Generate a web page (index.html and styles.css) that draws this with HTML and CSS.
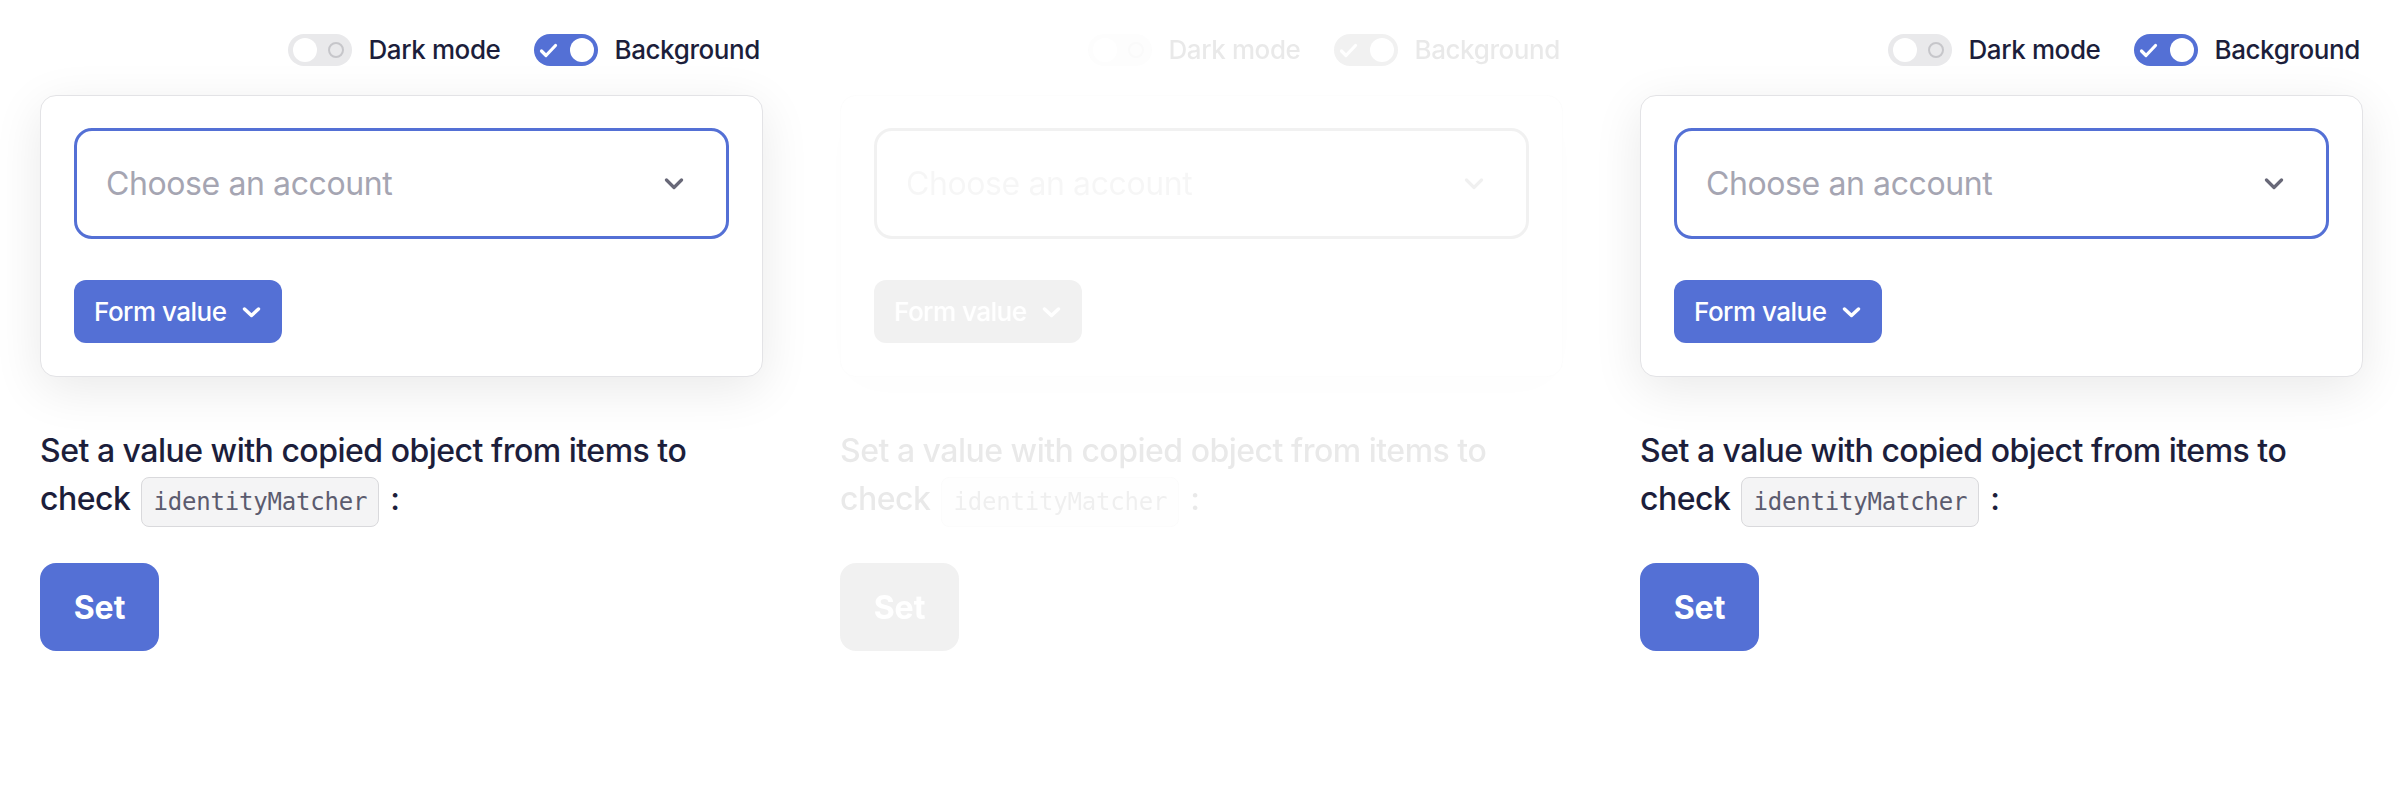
FILE: index.html
```html
<!DOCTYPE html>
<html>
<head>
<meta charset="utf-8">
<link rel="stylesheet" href="styles.css">
</head>
<body>
<div class="stage">
  <div class="panel">
    <div class="toolbar">
      <label class="switch-item">
        <span class="switch off"><span class="knob"></span><span class="ring"></span></span>
        <span class="switch-label">Dark mode</span>
      </label>
      <label class="switch-item">
        <span class="switch on"><svg class="check" width="19" height="15" viewBox="0 0 19 15"><path d="M2.5 8 L7 12.5 L16.5 2.5" fill="none" stroke="#fff" stroke-width="3.2" stroke-linecap="round" stroke-linejoin="round"/></svg><span class="knob"></span></span>
        <span class="switch-label">Background</span>
      </label>
    </div>
    <div class="card">
      <div class="select">
        <span class="placeholder">Choose an account</span>
        <svg class="chev" width="20" height="12" viewBox="0 0 20 12"><path d="M2.5 2 L10 9.5 L17.5 2" fill="none" stroke="#686878" stroke-width="3.2" stroke-linecap="round" stroke-linejoin="round"/></svg>
      </div>
      <button class="form-value">Form value <svg width="19" height="11" viewBox="0 0 19 11"><path d="M2.5 2 L9.5 8.5 L16.5 2" fill="none" stroke="#fff" stroke-width="3.4" stroke-linecap="round" stroke-linejoin="round"/></svg></button>
    </div>
    <p class="desc">Set a value with copied object from items to check <code>identityMatcher</code> :</p>
    <button class="set">Set</button>
  </div>

  <div class="panel faded">
    <div class="toolbar">
      <label class="switch-item">
        <span class="switch off"><span class="knob"></span><span class="ring"></span></span>
        <span class="switch-label">Dark mode</span>
      </label>
      <label class="switch-item">
        <span class="switch on"><svg class="check" width="19" height="15" viewBox="0 0 19 15"><path d="M2.5 8 L7 12.5 L16.5 2.5" fill="none" stroke="#fff" stroke-width="3.2" stroke-linecap="round" stroke-linejoin="round"/></svg><span class="knob"></span></span>
        <span class="switch-label">Background</span>
      </label>
    </div>
    <div class="card">
      <div class="select">
        <span class="placeholder">Choose an account</span>
        <svg class="chev" width="20" height="12" viewBox="0 0 20 12"><path d="M2.5 2 L10 9.5 L17.5 2" fill="none" stroke="#686878" stroke-width="3.2" stroke-linecap="round" stroke-linejoin="round"/></svg>
      </div>
      <button class="form-value">Form value <svg width="19" height="11" viewBox="0 0 19 11"><path d="M2.5 2 L9.5 8.5 L16.5 2" fill="none" stroke="#fff" stroke-width="3.4" stroke-linecap="round" stroke-linejoin="round"/></svg></button>
    </div>
    <p class="desc">Set a value with copied object from items to check <code>identityMatcher</code> :</p>
    <button class="set">Set</button>
  </div>

  <div class="panel">
    <div class="toolbar">
      <label class="switch-item">
        <span class="switch off"><span class="knob"></span><span class="ring"></span></span>
        <span class="switch-label">Dark mode</span>
      </label>
      <label class="switch-item">
        <span class="switch on"><svg class="check" width="19" height="15" viewBox="0 0 19 15"><path d="M2.5 8 L7 12.5 L16.5 2.5" fill="none" stroke="#fff" stroke-width="3.2" stroke-linecap="round" stroke-linejoin="round"/></svg><span class="knob"></span></span>
        <span class="switch-label">Background</span>
      </label>
    </div>
    <div class="card">
      <div class="select">
        <span class="placeholder">Choose an account</span>
        <svg class="chev" width="20" height="12" viewBox="0 0 20 12"><path d="M2.5 2 L10 9.5 L17.5 2" fill="none" stroke="#686878" stroke-width="3.2" stroke-linecap="round" stroke-linejoin="round"/></svg>
      </div>
      <button class="form-value">Form value <svg width="19" height="11" viewBox="0 0 19 11"><path d="M2.5 2 L9.5 8.5 L16.5 2" fill="none" stroke="#fff" stroke-width="3.4" stroke-linecap="round" stroke-linejoin="round"/></svg></button>
    </div>
    <p class="desc">Set a value with copied object from items to check <code>identityMatcher</code> :</p>
    <button class="set">Set</button>
  </div>
</div>
</body>
</html>
```

FILE: styles.css
```css
* { box-sizing: border-box; }
html, body { margin: 0; padding: 0; background: #fff; }
body {
  font-family: Inter, "Noto Sans", sans-serif;
  color: #1c1e3b;
  width: 2400px;
  height: 800px;
  overflow: hidden;
}
.stage {
  display: grid;
  grid-template-columns: 800px 800px 800px;
}
.panel {
  padding: 34px 37px 0 40px;
  display: flex;
  flex-direction: column;
  align-items: flex-start;
}
.panel.faded {
  opacity: 0.1;
  filter: grayscale(1);
}
.toolbar {
  align-self: stretch;
  display: flex;
  justify-content: flex-end;
  align-items: center;
  gap: 34px;
  padding-right: 3px;
  height: 32px;
}
.switch-item {
  display: flex;
  align-items: center;
  gap: 16px;
}
.switch-label {
  font-size: 26px;
  font-weight: 500;
  letter-spacing: -0.4px;
  line-height: 32px;
  color: #1c1e3b;
}
.switch {
  width: 64px;
  height: 32px;
  border-radius: 16px;
  display: flex;
  align-items: center;
  justify-content: space-between;
}
.switch.off {
  background: #e9e9eb;
  padding: 0 8px 0 5px;
}
.switch.on {
  background: #5470d5;
  padding: 0 4px 0 5px;
}
.knob {
  width: 24px;
  height: 24px;
  border-radius: 50%;
  background: #fff;
}
.ring {
  width: 16px;
  height: 16px;
  border-radius: 50%;
  border: 2px solid #c6c6ca;
}
.check { display: block; }
.card {
  align-self: stretch;
  margin-top: 29px;
  background: #fff;
  border: 1px solid #e3e3e6;
  border-radius: 16px;
  padding: 32px 33px 33px 33px;
  box-shadow: 0 12px 50px rgba(0, 0, 0, 0.09);
  display: flex;
  flex-direction: column;
  align-items: flex-start;
  gap: 41px;
}
.select {
  align-self: stretch;
  height: 111px;
  border: 3px solid #5470d5;
  border-radius: 18px;
  display: flex;
  align-items: center;
  justify-content: space-between;
  padding: 0 42px 0 29px;
}
.placeholder {
  font-size: 32px;
  letter-spacing: -0.4px;
  color: #a5a5b2;
}
.chev { display: block; }
.form-value {
  height: 63px;
  border: 0;
  border-radius: 12px;
  background: #5470d5;
  color: #fff;
  font-family: Inter, "Noto Sans", sans-serif;
  font-size: 26px;
  font-weight: 500;
  letter-spacing: -0.5px;
  display: flex;
  align-items: center;
  gap: 15px;
  padding: 0 21px 0 20px;
}
.form-value svg { display: block; margin-top: 2px; }
.desc {
  margin: 50px 0 0 0;
  font-size: 32px;
  font-weight: 500;
  line-height: 48px;
  letter-spacing: -0.5px;
  color: #1c1e3b;
  max-width: 680px;
}
code {
  display: inline-block;
  font-family: "DejaVu Sans Mono", monospace;
  font-size: 24px;
  line-height: 26px;
  font-weight: 400;
  letter-spacing: -0.2px;
  color: #5b5b6e;
  background: #f4f4f5;
  border: 1px solid #d9d9dc;
  border-radius: 8px;
  padding: 11px 11px;
  margin: 0 3px;
}
.set {
  margin-top: 36px;
  width: 119px;
  height: 88px;
  border: 0;
  border-radius: 16px;
  background: #5470d5;
  color: #fff;
  font-family: Inter, "Noto Sans", sans-serif;
  font-weight: 700;
  font-size: 32px;
}
```
